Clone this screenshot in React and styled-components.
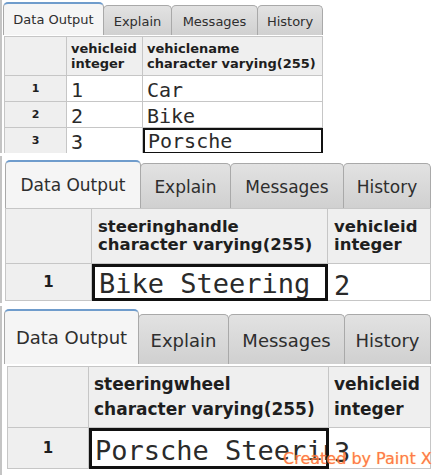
import styled, { createGlobalStyle } from "styled-components";

const GlobalStyle = createGlobalStyle`
  html, body {
    margin: 0;
    padding: 0;
    background: #ffffff;
  }
  body {
    font-family: "DejaVu Sans", Verdana, sans-serif;
  }
`;

const Page = styled.div`
  position: relative;
  width: 437px;
  height: 475px;
  overflow: hidden;
  background: #ffffff;
`;

const Panel = styled.section`
  height: ${(p) => p.$height}px;
  margin-top: ${(p) => p.$gap}px;
  padding-top: ${(p) => p.$padTop}px;
  padding-left: ${(p) => p.$padLeft}px;
  box-sizing: border-box;
  overflow: hidden;
  border-left: 2px solid #c4c4c4;
  background: #ffffff;
`;

const TabBar = styled.div`
  display: flex;
  align-items: flex-end;
  height: ${(p) => p.$height}px;
`;

const Tab = styled.div`
  width: ${(p) => p.$width}px;
  height: ${(p) => (p.$active ? "100%" : `calc(100% - ${p.$drop}px)`)};
  box-sizing: border-box;
  display: flex;
  align-items: center;
  justify-content: center;
  font-size: ${(p) => p.$font}px;
  color: #2e2e2e;
  border: 1px solid #a9a9a9;
  border-bottom: none;
  border-radius: 5px 5px 0 0;
  margin-right: -1px;
  padding-top: ${(p) => (p.$active ? 0 : 2)}px;
  background: ${(p) =>
    p.$active
      ? "#f5f5f5"
      : "linear-gradient(to bottom, #e2e2e2, #d0d0d0)"};
  border-top: ${(p) => (p.$active ? "2px solid #6f9ccc" : "1px solid #a9a9a9")};
  position: relative;
  z-index: ${(p) => (p.$active ? 1 : 0)};
`;

const Grid = styled.div`
  display: grid;
  grid-template-columns: ${(p) => p.$cols.map((c) => `${c}px`).join(" ")};
  grid-template-rows: ${(p) => p.$header}px;
  grid-auto-rows: ${(p) => p.$row}px;
  margin-left: ${(p) => p.$indent}px;
  margin-top: ${(p) => p.$top}px;
  width: max-content;
  border-top: 1px solid #c6c6c6;
  border-left: 1px solid #c6c6c6;
`;

const HeadCell = styled.div`
  box-sizing: border-box;
  border-right: 1px solid #c6c6c6;
  border-bottom: 1px solid #c6c6c6;
  background: #efefef;
  padding-left: ${(p) => p.$pad}px;
  display: flex;
  flex-direction: column;
  justify-content: center;
  font-weight: bold;
  font-size: ${(p) => p.$font}px;
  line-height: ${(p) => p.$line}px;
  color: #1e1e1e;
  white-space: nowrap;
  overflow: hidden;
`;

const RowNum = styled.div`
  box-sizing: border-box;
  border-right: 1px solid #c6c6c6;
  border-bottom: 1px solid #c6c6c6;
  background: #efefef;
  display: flex;
  align-items: center;
  justify-content: center;
  font-weight: bold;
  font-size: ${(p) => p.$font}px;
  color: #1e1e1e;
`;

const Cell = styled.div`
  box-sizing: border-box;
  border-right: 1px solid #c6c6c6;
  border-bottom: 1px solid #c6c6c6;
  background: #ffffff;
  font-family: "DejaVu Sans Mono", "Liberation Mono", monospace;
  font-size: ${(p) => p.$font}px;
  line-height: 1;
  color: #2a2a2a;
  padding-left: ${(p) => p.$pad}px;
  display: flex;
  align-items: flex-end;
  padding-bottom: ${(p) => p.$bottom}px;
  white-space: nowrap;
  overflow: hidden;
  ${(p) =>
    p.$selected &&
    `
    border: ${p.$ring}px solid #111111;
    padding-left: ${p.$pad - p.$ring + 1}px;
  `}
`;

const Watermark = styled.span`
  position: absolute;
  left: 283px;
  top: 449px;
  font-family: "DejaVu Sans", sans-serif;
  font-size: 16px;
  color: #ff6b3a;
  text-shadow: 0 0 1px #ffd36b;
  opacity: 0.9;
`;

const TABS = ["Data Output", "Explain", "Messages", "History"];

const panels = [
  {
    height: 153,
    gap: 0,
    padTop: 2,
    padLeft: 1,
    tabHeight: 33,
    tabWidths: [101, 69, 87, 66],
    tabDrop: 3,
    tabFont: 13,
    indent: 1,
    top: 1,
    cols: [62, 76, 180],
    header: 39,
    row: 26,
    headFont: 13,
    headLine: 15,
    headPad: 4,
    numFont: 11,
    cellFont: 20,
    cellPad: 4,
    cellBottom: 1,
    ring: 2,
    headers: [
      ["vehicleid", "integer"],
      ["vehiclename", "character varying(255)"],
    ],
    rows: [
      ["1", "Car"],
      ["2", "Bike"],
      ["3", "Porsche"],
    ],
    selected: [2, 1],
  },
  {
    height: 147,
    gap: 3,
    padTop: 4,
    padLeft: 3,
    tabHeight: 48,
    tabWidths: [136, 91, 114, 88],
    tabDrop: 3,
    tabFont: 17,
    indent: 0,
    top: 0,
    cols: [86, 236, 103],
    header: 55,
    row: 37,
    headFont: 16.5,
    headLine: 18,
    headPad: 6,
    numFont: 15,
    cellFont: 27,
    cellPad: 6,
    cellBottom: 1,
    ring: 3,
    headers: [
      ["steeringhandle", "character varying(255)"],
      ["vehicleid", "integer"],
    ],
    rows: [["Bike Steering", "2"]],
    selected: [0, 0],
  },
  {
    height: 172,
    gap: 3,
    padTop: 3,
    padLeft: 2,
    tabHeight: 55,
    tabWidths: [135, 91, 117, 87],
    tabDrop: 5,
    tabFont: 18,
    indent: 3,
    top: 2,
    cols: [81, 240, 102],
    header: 61,
    row: 41,
    headFont: 17,
    headLine: 25,
    headPad: 5,
    numFont: 15,
    cellFont: 27,
    cellPad: 5,
    cellBottom: 2,
    ring: 3,
    headers: [
      ["steeringwheel", "character varying(255)"],
      ["vehicleid", "integer"],
    ],
    rows: [["Porsche Steering", "3"]],
    selected: [0, 0],
  },
];

const DataOutput = ({ p }) => (
  <Panel $height={p.height} $gap={p.gap} $padTop={p.padTop} $padLeft={p.padLeft}>
    <TabBar $height={p.tabHeight}>
      {TABS.map((t, i) => (
        <Tab
          key={t}
          $active={i === 0}
          $width={p.tabWidths[i]}
          $drop={p.tabDrop}
          $font={p.tabFont}
        >
          {t}
        </Tab>
      ))}
    </TabBar>
    <Grid $cols={p.cols} $header={p.header} $row={p.row} $indent={p.indent} $top={p.top}>
      <HeadCell $font={p.headFont} $line={p.headLine} $pad={p.headPad} />
      {p.headers.map(([name, type]) => (
        <HeadCell key={name} $font={p.headFont} $line={p.headLine} $pad={p.headPad}>
          <span>{name}</span>
          <span>{type}</span>
        </HeadCell>
      ))}
      {p.rows.map((r, ri) => [
        <RowNum key={`n${ri}`} $font={p.numFont}>
          {ri + 1}
        </RowNum>,
        ...r.map((v, ci) => (
          <Cell
            key={`c${ri}-${ci}`}
            $font={p.cellFont}
            $pad={p.cellPad}
            $bottom={p.cellBottom}
            $ring={p.ring}
            $selected={p.selected[0] === ri && p.selected[1] === ci}
          >
            {v}
          </Cell>
        )),
      ])}
    </Grid>
  </Panel>
);

export default function App() {
  return (
    <>
      <GlobalStyle />
      <Page>
        {panels.map((p, i) => (
          <DataOutput key={i} p={p} />
        ))}
        <Watermark>Created by Paint X</Watermark>
      </Page>
    </>
  );
}
